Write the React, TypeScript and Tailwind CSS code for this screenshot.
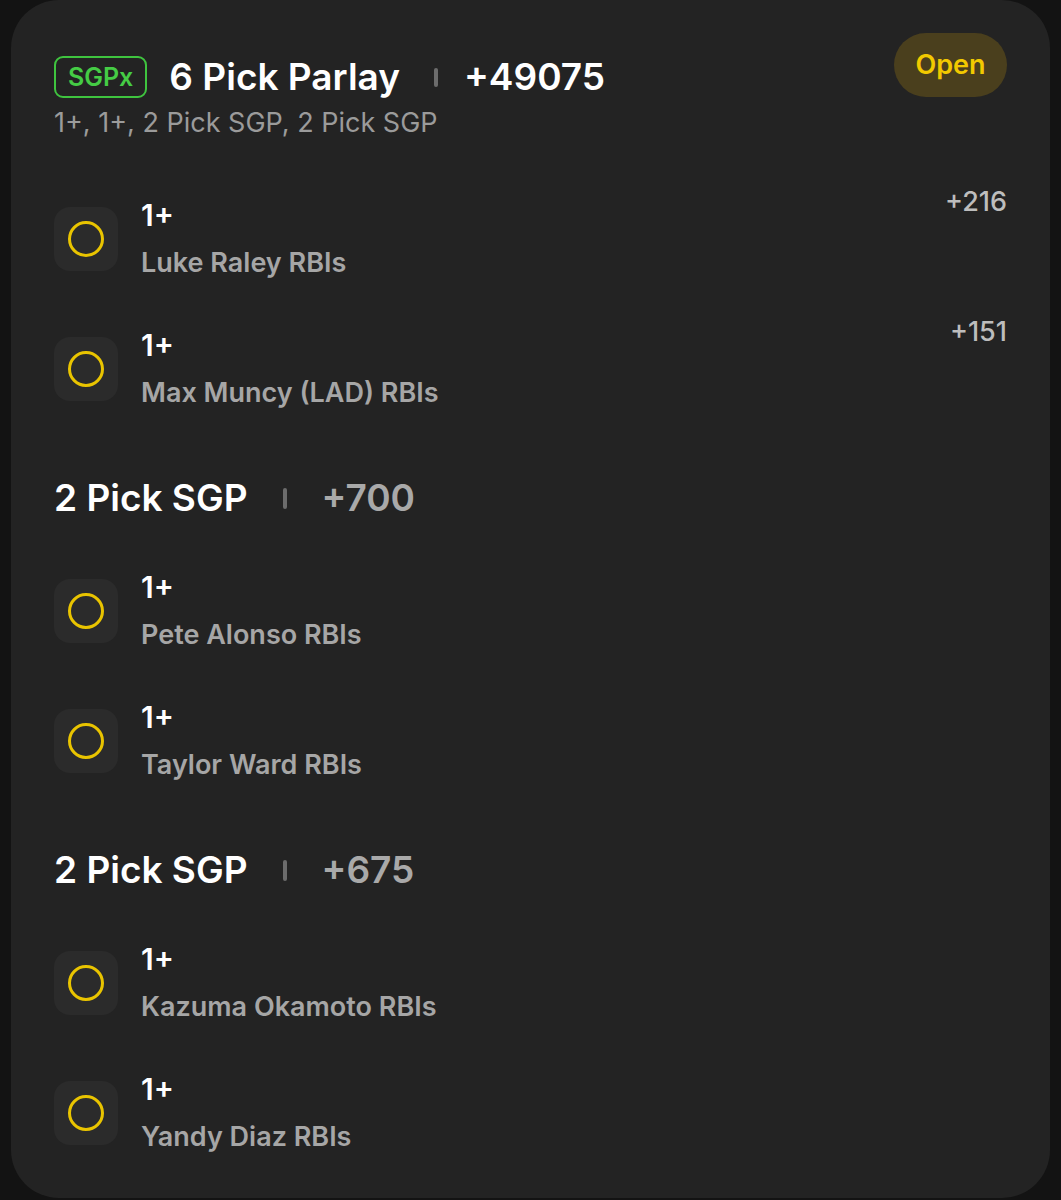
import React from "react";

type Leg = {
    line: string;
    name: string;
    odds?: string;
};

type Group = {
    title: string;
    odds: string;
    legs: Leg[];
};

const topLegs: Leg[] = [
    { line: "1+", name: "Luke Raley RBIs", odds: "+216" },
    { line: "1+", name: "Max Muncy (LAD) RBIs", odds: "+151" },
];

const groups: Group[] = [
    {
        title: "2 Pick SGP",
        odds: "+700",
        legs: [
            { line: "1+", name: "Pete Alonso RBIs" },
            { line: "1+", name: "Taylor Ward RBIs" },
        ],
    },
    {
        title: "2 Pick SGP",
        odds: "+675",
        legs: [
            { line: "1+", name: "Kazuma Okamoto RBIs" },
            { line: "1+", name: "Yandy Diaz RBIs" },
        ],
    },
];

function LegRow({ leg }: { leg: Leg }) {
    return (
        <div className="flex h-[130px] items-center">
            <div className="flex h-[64px] w-[64px] shrink-0 items-center justify-center rounded-[16px] bg-[#2b2b2b]">
                <span className="block h-[36px] w-[36px] rounded-full border-[3px] border-[#e9c400]" />
            </div>

            <div className="ml-[23px] flex flex-1 flex-col">
                <span className="text-[30px] font-semibold leading-[36px] text-white">
                    {leg.line}
                </span>
                <span className="mt-[12px] text-[27px] font-semibold leading-[36px] text-[#a6a6a6]">
                    {leg.name}
                </span>
            </div>

            {leg.odds && (
                <span className="mt-[12px] self-start text-[27px] font-medium leading-[32px] text-[#bdbdbd]">
                    {leg.odds}
                </span>
            )}
        </div>
    );
}

export default function App() {
    return (
        <div
            className="min-h-[1200px] w-full bg-[#131313] px-[11px]"
            style={{ fontFamily: "Inter, 'Noto Sans', sans-serif" }}
        >
            <div className="h-[1198px] rounded-[48px] bg-[#232323] px-[43px] pt-[33px]">

                <div className="flex items-start justify-between">
                    <div className="flex h-[88px] items-center">
                        <span className="flex h-[42px] items-center rounded-[9px] border-2 border-[#3fc43f] px-[12px] text-[25px] font-semibold leading-none text-[#45cc45]">
                            SGPx
                        </span>
                        <span className="ml-[22px] text-[37px] font-semibold text-white">
                            6 Pick Parlay
                        </span>
                        <span className="ml-[34px] mr-[26px] inline-block h-[19px] w-[4px] rounded-full bg-[#6c6c6c]" />
                        <span className="text-[37px] font-semibold text-white">
                            +49075
                        </span>
                    </div>

                    <span className="flex h-[64px] w-[113px] items-center justify-center rounded-full bg-[#4a3f1d] text-[27px] font-semibold text-[#f2c900]">
                        Open
                    </span>
                </div>

                <div className="mt-[-14px] text-[27px] leading-[32px] text-[#9b9b9b]">
                    1+, 1+, 2 Pick SGP, 2 Pick SGP
                </div>

                <div className="mt-[35px]">
                    {topLegs.map((leg) => (
                        <LegRow key={leg.name} leg={leg} />
                    ))}
                </div>

                {groups.map((group) => (
                    <div key={group.odds}>
                        <div className="flex h-[112px] items-center pt-[16px]">
                            <span className="text-[37px] font-semibold text-white">
                                {group.title}
                            </span>
                            <span className="mx-[35px] inline-block h-[21px] w-[4px] rounded-full bg-[#6c6c6c]" />
                            <span className="text-[37px] font-semibold text-[#a9a9a9]">
                                {group.odds}
                            </span>
                        </div>

                        {group.legs.map((leg) => (
                            <LegRow key={leg.name} leg={leg} />
                        ))}
                    </div>
                ))}

            </div>
        </div>
    );
}
